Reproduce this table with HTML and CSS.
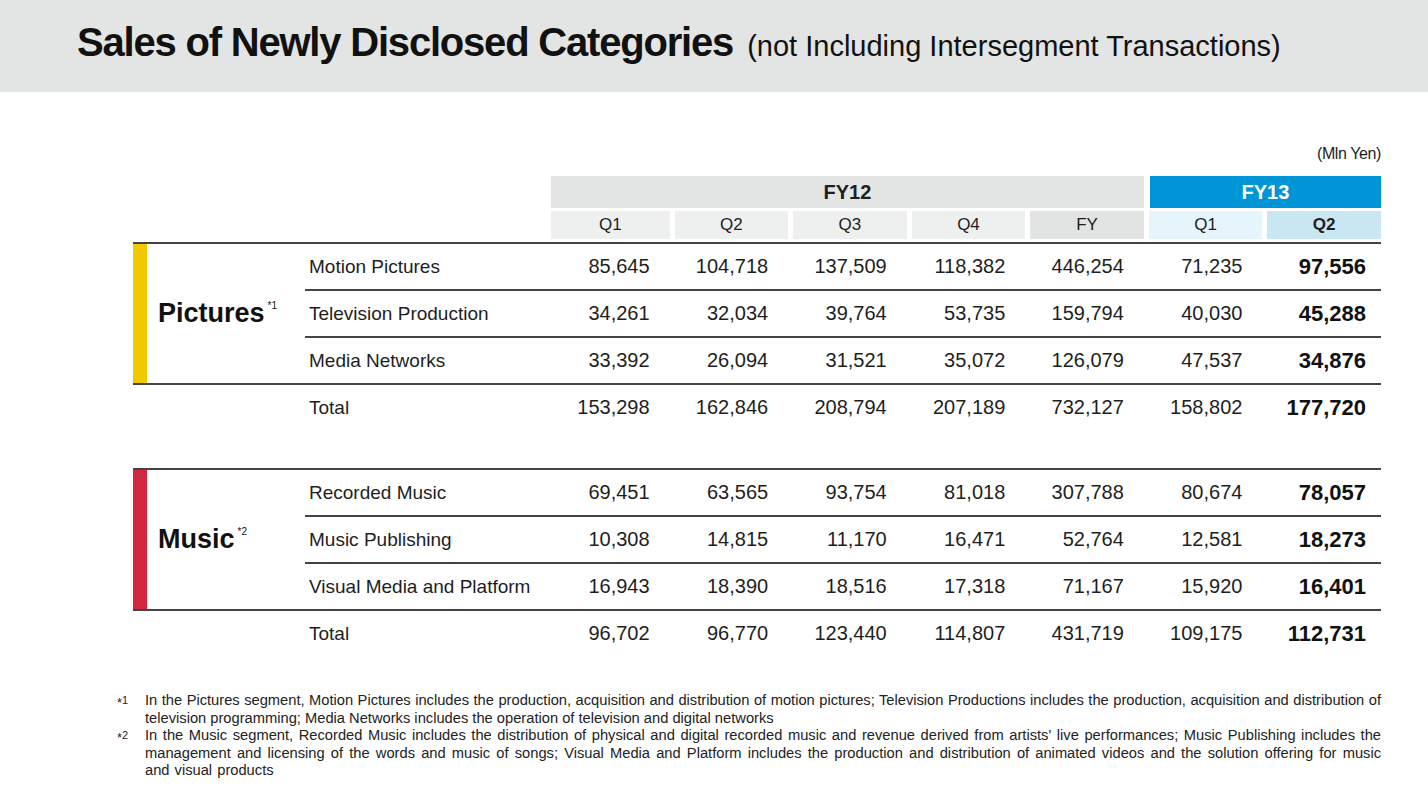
FILE: index.html
```html
<!DOCTYPE html>
<html lang="en">
<head>
    <meta charset="UTF-8">
    <meta name="viewport" content="width=device-width, initial-scale=1.0">
    <title>Sales of Newly Disclosed Categories</title>
    <link rel="stylesheet" href="styles.css">
</head>
<body>
    <header class="slide-header">
        <h1><span class="title">Sales of Newly Disclosed Categories</span> <span class="subtitle">(not Including Intersegment Transactions)</span></h1>
    </header>

    <main class="content">
        <p class="unit">(Mln Yen)</p>

        <table class="sales">
            <colgroup>
                <col class="col-bar">
                <col class="col-seg">
                <col class="col-item">
                <col><col><col><col><col><col><col>
            </colgroup>
            <thead>
                <tr class="year-row">
                    <th colspan="3" class="blank"></th>
                    <th colspan="5" class="fy12">FY12</th>
                    <th colspan="2" class="fy13">FY13</th>
                </tr>
                <tr class="q-row">
                    <th colspan="3" class="blank"></th>
                    <th>Q1</th>
                    <th>Q2</th>
                    <th>Q3</th>
                    <th>Q4</th>
                    <th class="fy">FY</th>
                    <th class="cur-q1">Q1</th>
                    <th class="cur-q2">Q2</th>
                </tr>
            </thead>

            <!-- Pictures -->
            <tbody>
                <tr class="seg-top">
                    <td rowspan="3" class="bar bar-pictures"></td>
                    <td rowspan="3" class="seg">Pictures<sup>*1</sup></td>
                    <td class="item">Motion Pictures</td>
                    <td class="num">85,645</td>
                    <td class="num">104,718</td>
                    <td class="num">137,509</td>
                    <td class="num">118,382</td>
                    <td class="num">446,254</td>
                    <td class="num">71,235</td>
                    <td class="num latest">97,556</td>
                </tr>
                <tr class="sub">
                    <td class="item">Television Production</td>
                    <td class="num">34,261</td>
                    <td class="num">32,034</td>
                    <td class="num">39,764</td>
                    <td class="num">53,735</td>
                    <td class="num">159,794</td>
                    <td class="num">40,030</td>
                    <td class="num latest">45,288</td>
                </tr>
                <tr class="sub">
                    <td class="item">Media Networks</td>
                    <td class="num">33,392</td>
                    <td class="num">26,094</td>
                    <td class="num">31,521</td>
                    <td class="num">35,072</td>
                    <td class="num">126,079</td>
                    <td class="num">47,537</td>
                    <td class="num latest">34,876</td>
                </tr>
                <tr class="total">
                    <td></td>
                    <td></td>
                    <td class="item">Total</td>
                    <td class="num">153,298</td>
                    <td class="num">162,846</td>
                    <td class="num">208,794</td>
                    <td class="num">207,189</td>
                    <td class="num">732,127</td>
                    <td class="num">158,802</td>
                    <td class="num latest">177,720</td>
                </tr>
                <tr class="spacer"><td colspan="10"></td></tr>
            </tbody>

            <!-- Music -->
            <tbody>
                <tr class="seg-top">
                    <td rowspan="3" class="bar bar-music"></td>
                    <td rowspan="3" class="seg">Music<sup>*2</sup></td>
                    <td class="item">Recorded Music</td>
                    <td class="num">69,451</td>
                    <td class="num">63,565</td>
                    <td class="num">93,754</td>
                    <td class="num">81,018</td>
                    <td class="num">307,788</td>
                    <td class="num">80,674</td>
                    <td class="num latest">78,057</td>
                </tr>
                <tr class="sub">
                    <td class="item">Music Publishing</td>
                    <td class="num">10,308</td>
                    <td class="num">14,815</td>
                    <td class="num">11,170</td>
                    <td class="num">16,471</td>
                    <td class="num">52,764</td>
                    <td class="num">12,581</td>
                    <td class="num latest">18,273</td>
                </tr>
                <tr class="sub">
                    <td class="item">Visual Media and Platform</td>
                    <td class="num">16,943</td>
                    <td class="num">18,390</td>
                    <td class="num">18,516</td>
                    <td class="num">17,318</td>
                    <td class="num">71,167</td>
                    <td class="num">15,920</td>
                    <td class="num latest">16,401</td>
                </tr>
                <tr class="total">
                    <td></td>
                    <td></td>
                    <td class="item">Total</td>
                    <td class="num">96,702</td>
                    <td class="num">96,770</td>
                    <td class="num">123,440</td>
                    <td class="num">114,807</td>
                    <td class="num">431,719</td>
                    <td class="num">109,175</td>
                    <td class="num latest">112,731</td>
                </tr>
            </tbody>
        </table>

        <div class="notes">
            <div class="note">
                <span class="mark">*<sup>1</sup></span>
                <p>In the Pictures segment, Motion Pictures includes the production, acquisition and distribution of motion pictures; Television Productions includes the production, acquisition and distribution of television programming; Media Networks includes the operation of television and digital networks</p>
            </div>
            <div class="note note-wide">
                <span class="mark">*<sup>2</sup></span>
                <p>In the Music segment, Recorded Music includes the distribution of physical and digital recorded music and revenue derived from artists' live performances; Music Publishing includes the management and licensing of the words and music of songs; Visual Media and Platform includes the production and distribution of animated videos and the solution offering for music and visual products</p>
            </div>
        </div>
    </main>
</body>
</html>
```

FILE: styles.css
```css
* {
    margin: 0;
    padding: 0;
    box-sizing: border-box;
}

body {
    font-family: 'Liberation Sans', Arial, sans-serif;
    background: #fff;
    color: #1e1e1e;
}

/* title band */
.slide-header {
    height: 92px;
    background: #e2e5e3;
    padding: 21px 0 0 77px;
}

.slide-header h1 {
    font-size: 40px;
    line-height: 42px;
    font-weight: 400;
    color: #111;
    white-space: nowrap;
}

.title {
    font-weight: 700;
    letter-spacing: -1.2px;
}

.subtitle {
    font-size: 29px;
    margin-left: 3px;
}

.content {
    width: 1264px;
    margin-left: 117px;
    padding-top: 53px;
}

.unit {
    text-align: right;
    font-size: 16px;
    letter-spacing: -0.4px;
    line-height: 18px;
    margin-bottom: 13px;
}

/* data table */
.sales {
    width: 1248px;
    margin-left: 16px;
    table-layout: fixed;
    border-collapse: separate;
    border-spacing: 0;
}

.col-bar { width: 14px; }
.col-seg { width: 158px; }
.col-item { width: 246px; }

.sales th {
    font-weight: 400;
    text-align: center;
}

.sales th.blank {
    background: none;
}

.year-row th {
    height: 32px;
    font-size: 20px;
    font-weight: 700;
}

.year-row .fy12 {
    background: #e4e6e5;
}

.year-row .fy13 {
    background: #0095d6;
    color: #fff;
    border-left: 6px solid #fff;
}

.q-row th {
    height: 34px;
    font-size: 17px;
    background: #eef0ef;
    border-top: 3px solid #fff;
    border-bottom: 3px solid #fff;
}

.q-row th + th + th {
    border-left: 5px solid #fff;
}

.q-row .fy {
    background: #e2e4e3;
}

.q-row .cur-q1 {
    background: #e6f4fb;
}

.q-row .cur-q2 {
    background: #c9e6f3;
    font-weight: 700;
}

.sales td {
    height: 47px;
    font-size: 19px;
    vertical-align: middle;
}

.seg-top td {
    border-top: 2px solid #444;
}

.sub td.item,
.sub td.num {
    border-top: 2px solid #444;
}

.total td {
    border-top: 2px solid #444;
}

.spacer td {
    height: 38px;
}

.bar-pictures {
    background: #f1c900;
}

.bar-music {
    background: #d1283f;
}

.sales td.seg {
    padding-left: 11px;
    font-size: 27px;
    font-weight: 700;
    color: #111;
}

.seg sup {
    font-size: 10px;
    font-weight: 400;
    vertical-align: 13px;
    margin-left: 3px;
}

.sales td.item {
    padding-left: 4px;
}

.sales td.num {
    text-align: right;
    padding-right: 20px;
    font-size: 20px;
}

.sales td.latest {
    padding-right: 15px;
    font-size: 22px;
    font-weight: 700;
    color: #111;
}

/* footnotes */
.notes {
    margin-top: 36px;
    font-size: 14.7px;
    line-height: 17.5px;
    color: #222;
}

.note {
    display: flex;
}

.note-wide {
    word-spacing: 1px;
}

.mark {
    width: 28px;
    flex-shrink: 0;
    font-size: 13px;
}

.mark sup {
    font-size: 11px;
    vertical-align: 3px;
}

.note p {
    flex: 1;
    text-align: justify;
}
```
